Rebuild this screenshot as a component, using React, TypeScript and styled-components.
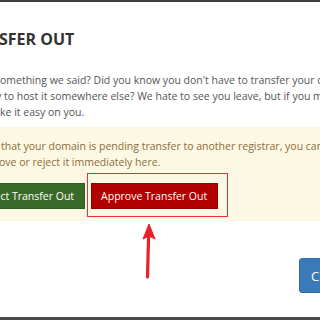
import React from "react";
import styled, { createGlobalStyle } from "styled-components";

const GlobalStyle = createGlobalStyle`
  html, body {
    margin: 0;
    padding: 0;
    background: #ffffff;
  }
  body {
    font-family: "Open Sans", "Liberation Sans", sans-serif;
  }
`;

const Frame = styled.div`
  position: relative;
  width: 320px;
  height: 320px;
  overflow: hidden;
  background: #ffffff;
  display: flex;
  flex-direction: column;
  border-top: 2px solid #3c3c3c;
  box-sizing: border-box;
`;

const Title = styled.h4`
  margin: 26px 0 0 0;
  font-size: 16px;
  line-height: 22px;
  font-weight: 700;
  color: #333333;
  white-space: nowrap;
  text-indent: -45px;
`;

const Body = styled.div`
  margin-top: 22px;
  font-size: 10.5px;
  line-height: 16px;
  color: #555555;
`;

const Line = styled.div<{ $shift: number }>`
  white-space: nowrap;
  margin-left: ${(p) => p.$shift}px;
`;

const Alert = styled.div`
  margin-top: 7px;
  background: #fcf8e3;
  padding: 11px 0 12px 0;
  font-size: 10.5px;
  line-height: 16px;
  color: #8a6d3b;
`;

const ButtonRow = styled.div`
  display: flex;
  gap: 6px;
  margin-top: 13px;
  margin-left: -31px;
`;

const Button = styled.button<{ $tone: "green" | "red" }>`
  font-family: "Open Sans", "Liberation Sans", sans-serif;
  font-size: 10.5px;
  line-height: 16px;
  height: 26px;
  padding: 0 9.5px;
  border: 1px solid ${(p) => (p.$tone === "green" ? "#2f5a20" : "#9a0000")};
  border-radius: 0;
  color: #ffffff;
  background: ${(p) => (p.$tone === "green" ? "#3a6a28" : "#b00000")};
  white-space: nowrap;
`;

const Highlight = styled.div`
  position: relative;
  display: flex;

  &::after {
    content: "";
    position: absolute;
    top: -10px;
    left: -4px;
    right: -10px;
    bottom: -8px;
    border: 1.5px solid #ee2e32;
    pointer-events: none;
  }
`;

const Arrow = styled.svg`
  position: absolute;
  left: 138px;
  top: 220px;
`;

const Footer = styled.div`
  display: flex;
  justify-content: flex-end;
  margin-top: 37px;
`;

const CloseButton = styled.button`
  font-family: "Open Sans", "Liberation Sans", sans-serif;
  font-size: 13px;
  height: 35px;
  width: 64px;
  margin-right: -43px;
  padding: 0 11px;
  text-align: left;
  border: 1px solid #2e6da4;
  border-radius: 3px 0 0 3px;
  background: #3a7ab8;
  color: #ffffff;
`;

const BottomBar = styled.div`
  position: absolute;
  left: 0;
  right: 0;
  bottom: 0;
  height: 3px;
  background: #4a4a4a;
`;

export default function App() {
  return (
    <>
      <GlobalStyle />
      <Frame>
        <Title>TRANSFER OUT</Title>
        <Body>
          <Line $shift={-5}>
            something we said? Did you know you don't have to transfer your domain
          </Line>
          <Line $shift={-4}>y to host it somewhere else? We hate to see you leave, but if you must</Line>
          <Line $shift={0}>ke it easy on you.</Line>
        </Body>
        <Alert>
          <Line $shift={1}>
            that your domain is pending transfer to another registrar, you can
          </Line>
          <Line $shift={-1}>ove or reject it immediately here.</Line>
          <ButtonRow>
            <Button $tone="green">Reject Transfer Out</Button>
            <Highlight>
              <Button $tone="red">Approve Transfer Out</Button>
            </Highlight>
          </ButtonRow>
        </Alert>
        <Footer>
          <CloseButton>Close</CloseButton>
        </Footer>
        <Arrow width="22" height="60" viewBox="0 0 22 60">
          <path d="M9.5 55 L10.6 14" stroke="#e8202a" strokeWidth="3.2" strokeLinecap="round" fill="none" />
          <path d="M11 2 L17 17 L11 14 L5 17 Z" fill="#e8202a" stroke="#e8202a" strokeWidth="1" strokeLinejoin="round" />
        </Arrow>
        <BottomBar />
      </Frame>
    </>
  );
}
